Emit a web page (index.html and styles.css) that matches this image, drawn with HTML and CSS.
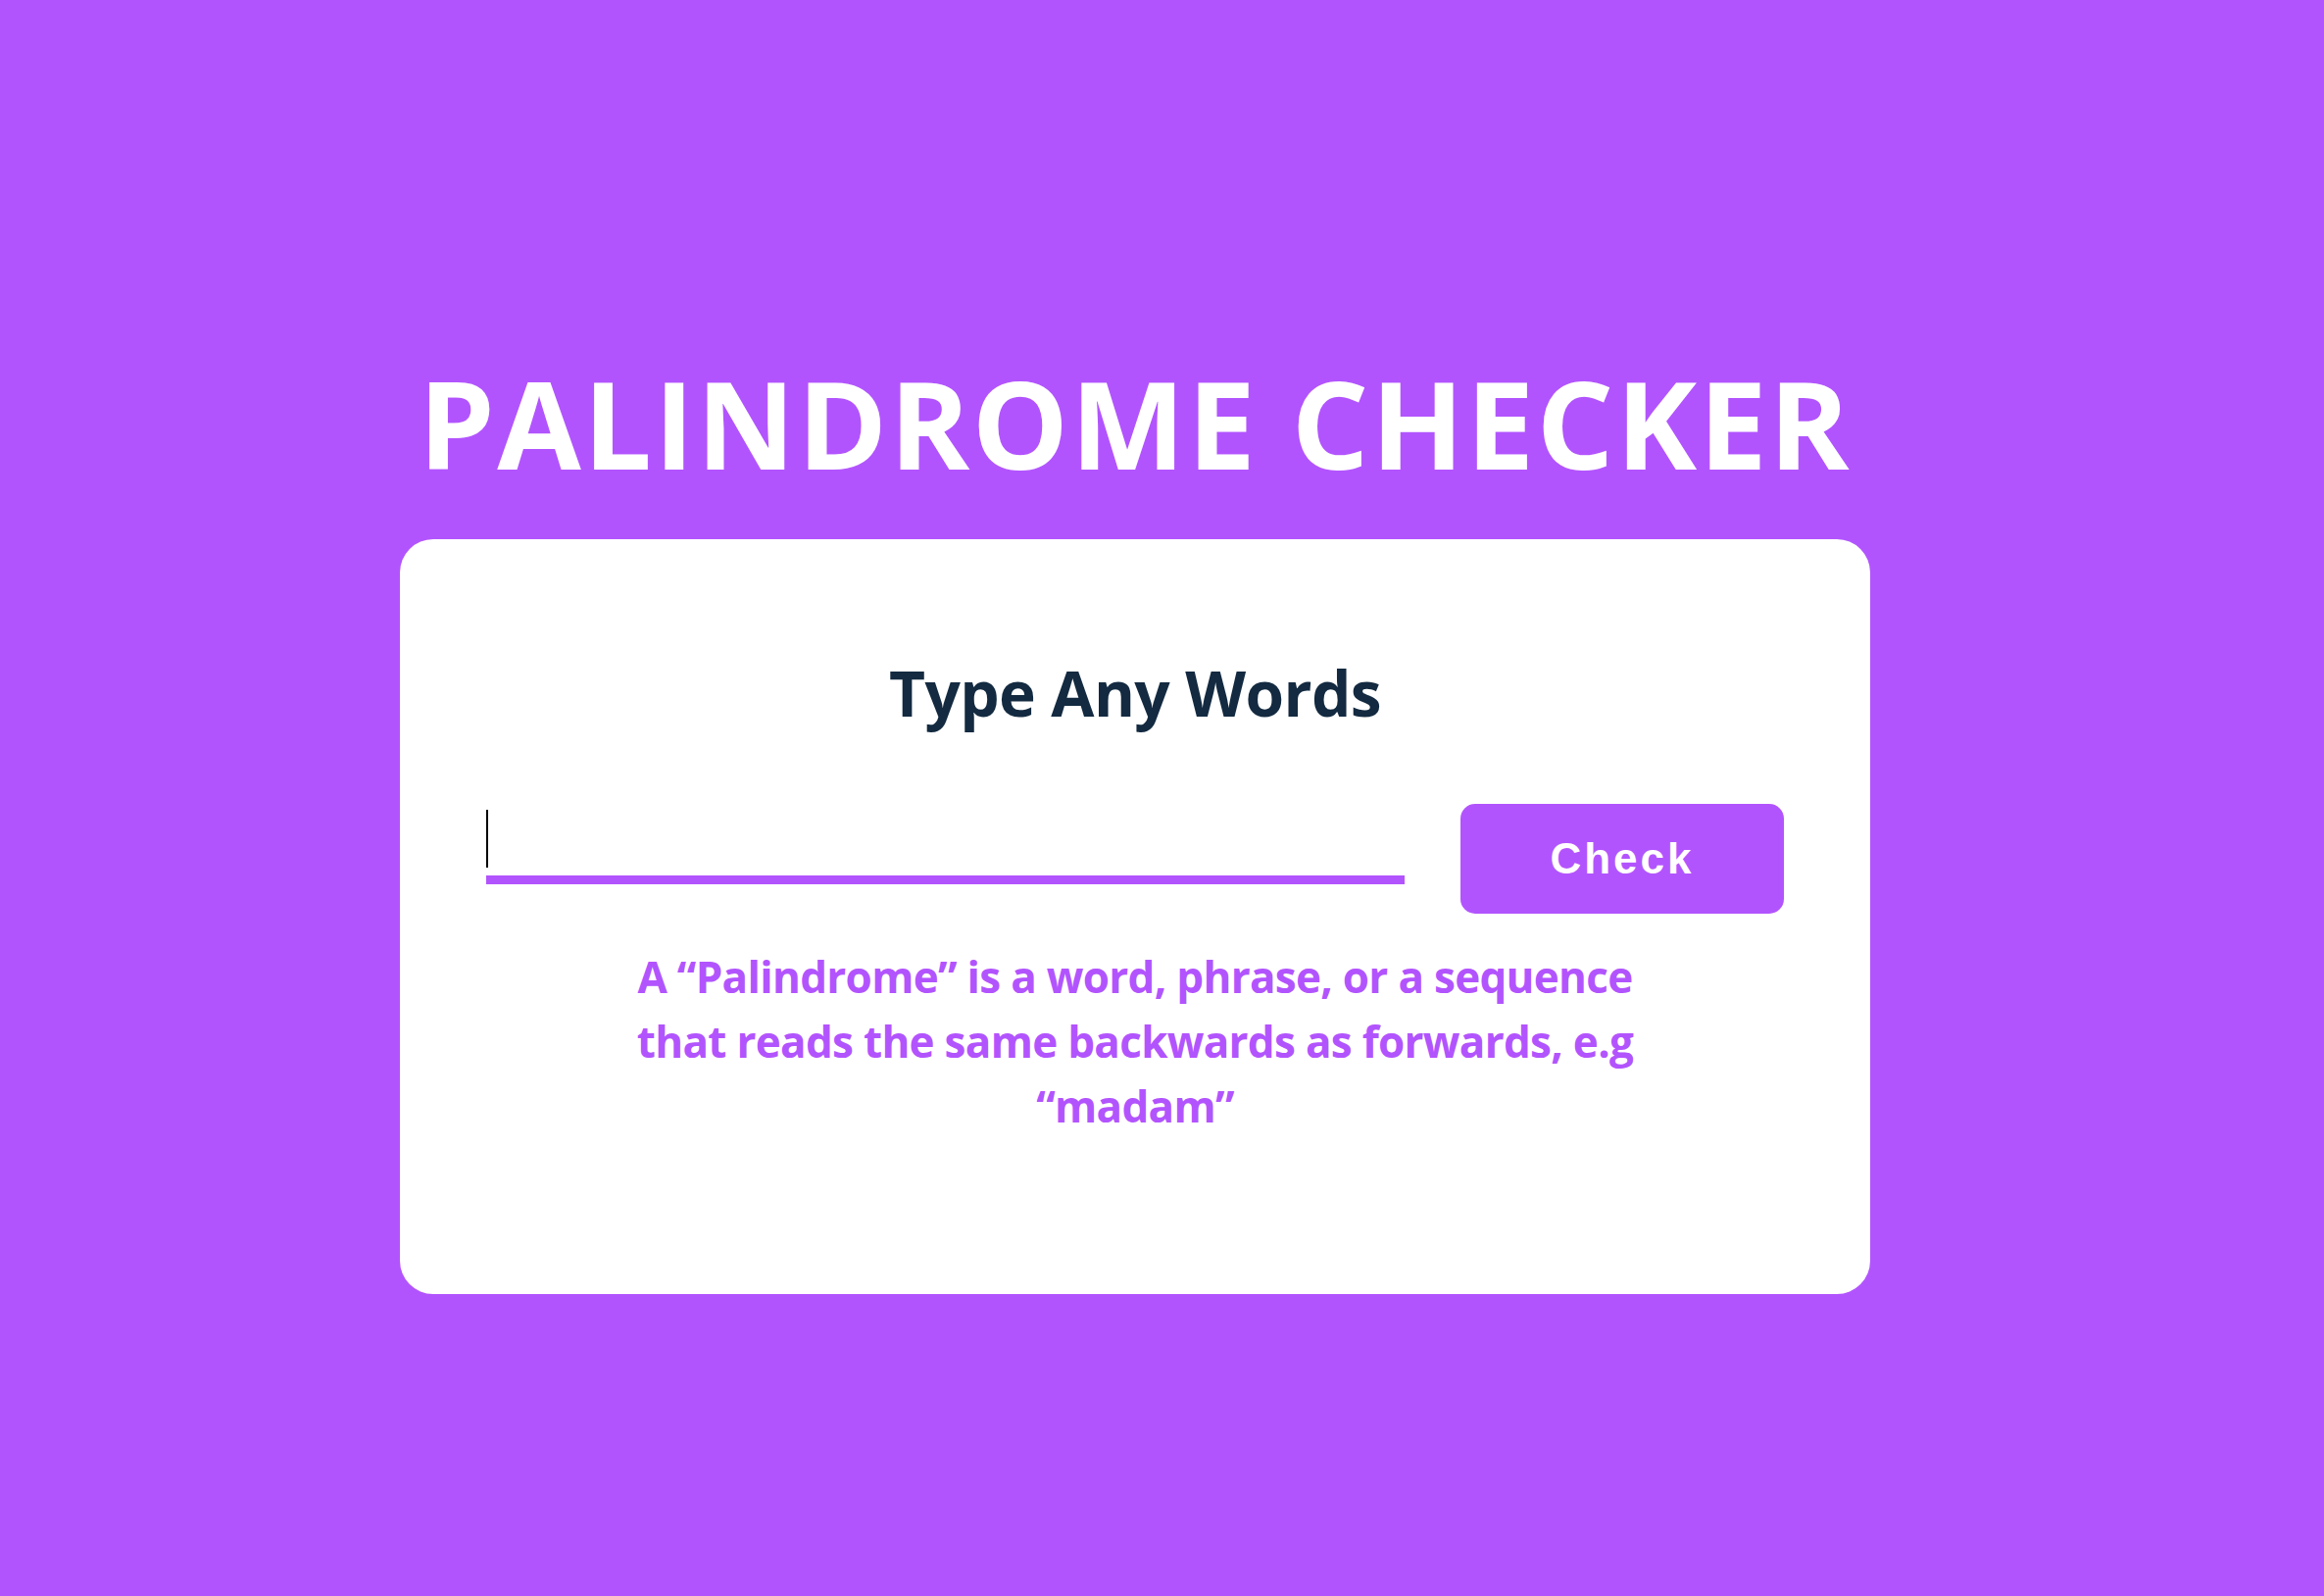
FILE: index.html
```html
<!DOCTYPE html>
<html lang="en">
<head>
<meta charset="utf-8">
<title>Palindrome Checker</title>
<link rel="stylesheet" href="styles.css">
</head>
<body>
<main class="page">
  <h1 class="title">PALINDROME CHECKER</h1>
  <section class="card">
    <h2 class="subtitle">Type Any Words</h2>
    <div class="row">
      <div class="input-wrap">
        <input class="word-input" type="text" autofocus>
        <span class="caret"></span>
      </div>
      <button class="check-btn" type="button">Check</button>
    </div>
    <p class="desc">A “Palindrome” is a word, phrase, or a sequence<br>that reads the same backwards as forwards, e.g<br>“madam”</p>
  </section>
</main>
</body>
</html>
```
FILE: styles.css
```css
html, body {
  margin: 0;
  padding: 0;
}
body {
  background: #b254fe;
  min-height: 100vh;
  font-family: "Open Sans", "Noto Sans", sans-serif;
}
.page {
  width: 2316px;
  display: flex;
  flex-direction: column;
  align-items: center;
  padding-top: 369px;
}
.title {
  margin: 0;
  font-size: 124px;
  line-height: 1;
  font-weight: 700;
  color: #ffffff;
  letter-spacing: 2.2px;
}
.card {
  margin-top: 57px;
  width: 1500px;
  box-sizing: border-box;
  height: 770px;
  background: #ffffff;
  border-radius: 34px;
  padding: 125px 88px 0;
  display: flex;
  flex-direction: column;
  align-items: center;
}
.subtitle {
  margin: 0;
  font-size: 64px;
  line-height: 1;
  font-weight: 700;
  color: #132a40;
  letter-spacing: -0.6px;
}
.row {
  margin-top: 81px;
  width: 100%;
  display: flex;
  align-items: flex-start;
  gap: 57px;
}
.input-wrap {
  flex: 1;
  position: relative;
  display: flex;
}
.word-input {
  flex: 1;
  min-width: 0;
  box-sizing: border-box;
  height: 82px;
  border: none;
  border-bottom: 9px solid #b254fe;
  padding: 0;
  font-family: "Open Sans", sans-serif;
  font-size: 44px;
  outline: none;
  background: transparent;
  caret-color: transparent;
}
.caret {
  position: absolute;
  left: 0;
  top: 6px;
  width: 2px;
  height: 59px;
  background: #000;
}
.check-btn {
  width: 330px;
  height: 112px;
  border: none;
  border-radius: 15px;
  background: #b254fe;
  color: #ffffff;
  font-family: "Liberation Sans", Arial, sans-serif;
  font-weight: 700;
  font-size: 44px;
  letter-spacing: 3px;
  padding: 0;
}
.desc {
  margin: 31px 0 0;
  font-size: 44px;
  line-height: 66px;
  font-weight: 700;
  color: #b254fe;
  text-align: center;
  letter-spacing: -0.7px;
}
```
